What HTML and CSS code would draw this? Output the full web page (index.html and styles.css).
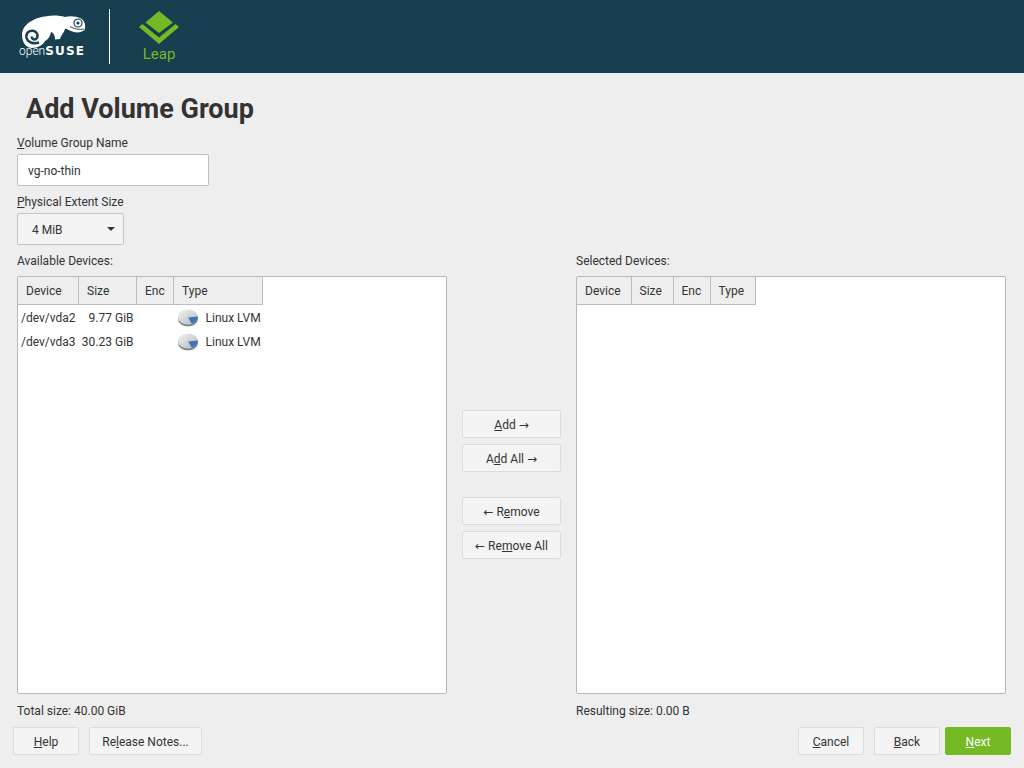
FILE: index.html
```html
<!DOCTYPE html>
<html lang="en">
<head>
<meta charset="utf-8">
<title>Add Volume Group</title>
<link rel="stylesheet" href="styles.css">
</head>
<body>
<header class="banner">
  <div class="suse-logo">
    <svg class="chameleon" width="68" height="33" viewBox="0 0 68 33">
      <path fill="#fff" d="M3 20C3 10 14 3 26 1.500C34 0 40 .5 46 2C50 .5 57 1 62 3.500C66 6 67 11 65.500 15C62 18 56 18 52 16C50 15.500 47 13 46 14C45 18 42 20 41 24L36 24.500C36 21 35 18 32 17C31 21 30 24 26 26C24 30 19 33 13 33C7 33 3 27 3 20Z"/>
      <path fill="none" stroke="#173f4f" stroke-width="2.500" d="M20 27.500C15 29 9 28 7.500 23C6.500 18 10 15.500 14 15.800C18 16.500 19.500 20 18 23C16 25.500 12.500 24.500 13 21.500"/>
      <circle cx="59" cy="8" r="4" fill="none" stroke="#173f4f" stroke-width="1.200"/>
      <circle cx="59" cy="8" r="1.600" fill="#173f4f"/>
      <path fill="none" stroke="#173f4f" stroke-width=".9" d="M51 11.500C55 14 60 15 65 14"/>
    </svg>
    <div class="wordmark"><span class="word-open">open</span><span class="word-suse">SUSE</span></div>
  </div>
  <div class="divider"></div>
  <div class="leap-logo">
    <svg width="40" height="34" viewBox="0 0 40 34">
      <path fill="#73ba25" d="M20 0L34 11.500L20 22L6.500 11.500Z"/>
      <path fill="#73ba25" d="M0 16L3.500 13L20 26.500L36.500 13L40 16L20 33Z"/>
    </svg>
    <div class="leap-name">Leap</div>
  </div>
</header>

<main class="content">
  <h1 class="title">Add Volume Group</h1>

  <label class="field-label"><u>V</u>olume Group Name</label>
  <div class="text-input">vg-no-thin</div>

  <label class="field-label field-second"><u>P</u>hysical Extent Size</label>
  <div class="combo"><span>4 MiB</span><span class="combo-arrow"></span></div>

  <div class="selector">
    <section class="pane">
      <div class="pane-label">Available Devices:</div>
      <div class="table-frame">
        <table class="devices">
          <thead>
            <tr>
              <th class="col-device">Device</th>
              <th class="col-size">Size</th>
              <th class="col-enc">Enc</th>
              <th class="col-type">Type</th>
            </tr>
          </thead>
          <tbody>
            <tr>
              <td>/dev/vda2</td>
              <td class="num">9.77 GiB</td>
              <td></td>
              <td><span class="type-cell">
                <svg class="disk" width="22" height="18" viewBox="0 0 22 18"><use href="#disk-icon"/></svg>Linux LVM</span></td>
            </tr>
            <tr>
              <td>/dev/vda3</td>
              <td class="num">30.23 GiB</td>
              <td></td>
              <td><span class="type-cell">
                <svg class="disk" width="22" height="18" viewBox="0 0 22 18"><use href="#disk-icon"/></svg>Linux LVM</span></td>
            </tr>
          </tbody>
        </table>
      </div>
      <div class="pane-foot">Total size: 40.00 GiB</div>
    </section>

    <div class="transfer">
      <div class="transfer-group">
        <button class="btn transfer-btn"><u>A</u>dd <span class="arrow">→</span></button>
        <button class="btn transfer-btn">A<u>d</u>d All <span class="arrow">→</span></button>
      </div>
      <div class="transfer-group">
        <button class="btn transfer-btn"><span class="arrow">←</span> R<u>e</u>move</button>
        <button class="btn transfer-btn"><span class="arrow">←</span> Re<u>m</u>ove All</button>
      </div>
    </div>

    <section class="pane">
      <div class="pane-label">Selected Devices:</div>
      <div class="table-frame">
        <table class="devices">
          <thead>
            <tr>
              <th class="col-device-r">Device</th>
              <th class="col-size-r">Size</th>
              <th class="col-enc">Enc</th>
              <th class="col-type-r">Type</th>
            </tr>
          </thead>
        </table>
      </div>
      <div class="pane-foot">Resulting size: 0.00 B</div>
    </section>
  </div>
</main>

<footer class="actions">
  <div class="action-group">
    <button class="btn act-help"><u>H</u>elp</button>
    <button class="btn act-notes">Re<u>l</u>ease Notes...</button>
  </div>
  <div class="action-group">
    <button class="btn act-nav"><u>C</u>ancel</button>
    <button class="btn act-nav"><u>B</u>ack</button>
    <button class="btn act-nav act-next"><u>N</u>ext</button>
  </div>
</footer>

<svg class="defs" width="0" height="0">
  <defs>
    <linearGradient id="disk-top" x1="0" y1="0" x2="1" y2="1">
      <stop offset="0" stop-color="#f2f3f4"/>
      <stop offset="1" stop-color="#b4b8bc"/>
    </linearGradient>
    <symbol id="disk-icon" viewBox="0 0 22 18">
      <ellipse cx="11" cy="10" rx="10" ry="7.500" fill="#85898c"/>
      <ellipse cx="11" cy="8" rx="10" ry="7.500" fill="url(#disk-top)"/>
      <path fill="#3f73b8" d="M11 8.500L21 7.500C21 11 18 14 15 15Z"/>
    </symbol>
  </defs>
</svg>
</body>
</html>
```
FILE: styles.css
```css
* { box-sizing: border-box; }

html, body { height: 100%; }

body {
  margin: 0;
  height: 768px;
  overflow: hidden;
  display: flex;
  flex-direction: column;
  background: #eeeeee;
  color: #333333;
  font-family: Roboto, "Liberation Sans", sans-serif;
  font-size: 12px;
  line-height: 14px;
}

.banner {
  height: 73px;
  flex: none;
  display: flex;
  align-items: flex-start;
  background: #173f4f;
  padding-left: 19px;
}

.suse-logo { width: 68px; margin-top: 15px; }
.chameleon { display: block; }

.wordmark {
  display: flex;
  align-items: baseline;
  color: #fff;
  line-height: 12px;
  margin-top: -3px;
  white-space: nowrap;
}
.word-open { font-size: 12px; font-weight: 300; }
.word-suse {
  font-family: "DejaVu Sans", sans-serif;
  font-size: 12px;
  font-weight: 700;
  letter-spacing: 1.200px;
}

.divider {
  width: 1px;
  height: 55px;
  margin: 9px 0 0 22px;
  background: #fff;
}

.leap-logo {
  width: 40px;
  margin: 11px 0 0 29px;
  text-align: center;
}
.leap-logo svg { display: block; }
.leap-name {
  color: #73ba25;
  font-size: 15px;
  line-height: 18px;
}

.content {
  flex: 1;
  min-height: 0;
  display: flex;
  flex-direction: column;
  padding: 0 18px 0 17px;
}

.title {
  margin: 20px 0 0 9px;
  font-size: 27px;
  line-height: 32px;
  font-weight: 700;
  color: #333;
}

.field-label { display: block; margin-top: 11px; height: 18px; }
.field-second { margin-top: 9px; }

.text-input {
  width: 192px;
  height: 32px;
  padding: 2px 10px 0;
  display: flex;
  align-items: center;
  background: #fff;
  border: 1px solid #c0c0c0;
  border-radius: 2px;
}

.combo {
  width: 107px;
  height: 32px;
  padding: 2px 8px 0 14px;
  display: flex;
  align-items: center;
  justify-content: space-between;
  background: #f4f4f4;
  border: 1px solid #c6c6c6;
  border-radius: 2px;
}
.combo-arrow {
  width: 0;
  height: 0;
  border-left: 4px solid transparent;
  border-right: 4px solid transparent;
  border-top: 4px solid #333;
  margin-top: -2px;
}

.selector {
  flex: 1;
  min-height: 0;
  margin-top: 8px;
  display: grid;
  grid-template-columns: 430px 1fr 430px;
}

.pane { display: flex; flex-direction: column; min-height: 0; }
.pane-label { height: 23px; padding-top: 1px; }

.table-frame {
  flex: 1;
  min-height: 0;
  background: #fff;
  border: 1px solid #b8b8b8;
  border-radius: 2px;
}

.pane-foot { height: 33px; padding-top: 10px; }

.devices { border-collapse: collapse; table-layout: fixed; }

.devices th {
  height: 27px;
  padding: 2px 0 0 8px;
  background: #eeeeee;
  font-weight: 400;
  text-align: left;
  border-right: 1px solid #bdbdbd;
  border-bottom: 1px solid #bdbdbd;
}

.col-device { width: 60px; }
.col-size { width: 58px; }
.col-enc { width: 37px; }
.col-type { width: 89px; }
.col-device-r { width: 54px; }
.col-size-r { width: 42px; }
.col-type-r { width: 45px; }

.devices td {
  height: 24px;
  padding: 0 3px;
  white-space: nowrap;
}
.devices tbody tr:first-child td { height: 26px; padding-top: 2px; }
.devices td.num { text-align: right; }

.type-cell { display: flex; align-items: center; gap: 7px; margin-right: -4px; }
.disk { flex: none; }

.transfer {
  display: flex;
  flex-direction: column;
  justify-content: center;
  align-items: center;
  gap: 25px;
  padding-bottom: 12px;
}
.transfer-group { display: flex; flex-direction: column; gap: 6px; }

.btn {
  height: 28px;
  padding: 2px 0 0;
  background: #f4f4f4;
  border: 1px solid #dcdcdc;
  border-radius: 2px;
  color: #333;
  font: inherit;
}
.transfer-btn { width: 99px; }
.arrow { font-family: "DejaVu Sans", sans-serif; font-size: 12px; line-height: 12px; }

.actions {
  flex: none;
  height: 41px;
  display: flex;
  justify-content: space-between;
  padding: 0 13px;
}
.action-group { display: flex; gap: 10px; }
.act-help { width: 66px; }
.act-notes { width: 113px; }
.act-nav { width: 66px; }
.act-next {
  margin-left: -5px;
  background: #73ba25;
  border-color: #73ba25;
  color: #fff;
}

.defs { position: absolute; }
```
